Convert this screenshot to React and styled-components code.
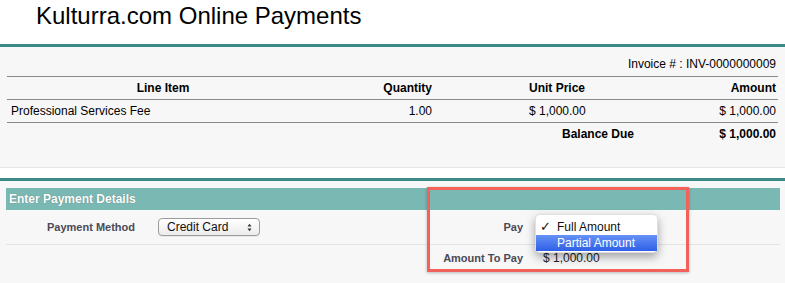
import styled, { createGlobalStyle } from 'styled-components';

const GlobalStyle = createGlobalStyle`
  body {
    margin: 0;
    background: #fff;
    font-family: "Liberation Sans", Arial, sans-serif;
    color: #000;
  }
`;

const Page = styled.div`
  width: 785px;
  height: 283px;
  overflow: hidden;
`;

const Title = styled.h1`
  box-sizing: border-box;
  height: 47px;
  margin: 0;
  padding: 2px 0 0 36px;
  font-size: 24px;
  line-height: 28px;
  font-weight: normal;
  border-bottom: 3px solid #3c8a87;
`;

const InvoicePanel = styled.div`
  background: #f7f7f7;
  padding: 7px 7px 22px;
  border-bottom: 1px solid #e6e6e6;
  font-size: 12px;
`;

const InvoiceNo = styled.div`
  text-align: right;
  line-height: 20px;
  margin-bottom: 2px;
  padding-right: 2px;
`;

const Row = styled.div`
  display: grid;
  grid-template-columns: 312px 120px 201px 1fr;
  height: 22px;
  line-height: 22px;
  border-top: ${p => (p.$top ? '1px solid #8a8a8a' : 'none')};
  border-bottom: ${p => (p.$line ? '1px solid #8a8a8a' : 'none')};
  font-weight: ${p => (p.$bold ? 'bold' : 'normal')};
`;

const Cell = styled.div`
  text-align: ${p => p.$align || 'left'};
  padding-left: ${p => p.$pl || 0}px;
  padding-right: ${p => p.$pr || 0}px;
  white-space: nowrap;
`;

const PaymentSection = styled.div`
  position: relative;
  margin-top: 10px;
  border-top: 3px solid #3c8a87;
  background: #f7f7f7;
  padding: 7px 5px 20px 6px;
`;

const SectionHeader = styled.div`
  height: 22px;
  line-height: 22px;
  background: #7ab8b4;
  color: #fff;
  font-size: 12px;
  font-weight: bold;
  padding-left: 3px;
  text-shadow: 0 0 1px rgba(0, 0, 0, 0.35);
`;

const FormRow = styled.div`
  display: grid;
  grid-template-columns: 141px 242px 146px 1fr;
  height: ${p => p.$h}px;
  border-bottom: ${p => (p.$line ? '1px solid #e3e3e3' : 'none')};
`;

const Label = styled.div`
  display: flex;
  align-items: ${p => p.$valign || 'center'};
  justify-content: flex-end;
  padding-right: 12px;
  padding-top: ${p => p.$pt || 0}px;
  font-size: 11px;
  font-weight: bold;
  color: #4a4a56;
  line-height: 22px;
`;

const Field = styled.div`
  position: relative;
  display: flex;
  align-items: ${p => p.$valign || 'center'};
  padding-left: ${p => p.$pl}px;
  padding-top: ${p => p.$pt || 0}px;
  font-size: 12px;
  color: #222;
  line-height: 22px;
`;

const SelectBox = styled.div`
  box-sizing: border-box;
  width: 102px;
  height: 18px;
  display: flex;
  align-items: center;
  justify-content: space-between;
  padding: 0 7px 0 8px;
  border: 1px solid #9c9c9c;
  border-radius: 4px;
  background: linear-gradient(#ffffff, #ececec);
  box-shadow: 0 1px 0 rgba(0, 0, 0, 0.06);
  font-size: 12px;
  line-height: 16px;
  color: #111;
`;

const Popup = styled.div`
  position: absolute;
  left: 0;
  top: 4px;
  width: 123px;
  box-sizing: border-box;
  padding: 4px 0 1px;
  background: #fff;
  border: 1px solid rgba(0, 0, 0, 0.12);
  border-radius: 5px;
  box-shadow: 0 4px 10px rgba(0, 0, 0, 0.35);
  z-index: 2;
`;

const Option = styled.div`
  position: relative;
  height: 16px;
  line-height: 16px;
  padding-left: 21px;
  font-size: 12px;
  color: ${p => (p.$active ? '#fff' : '#111')};
  background: ${p => (p.$active ? 'linear-gradient(#6792f6, #2f5fe6)' : 'transparent')};
`;

const Check = styled.span`
  position: absolute;
  left: 4px;
  top: 0;
  font-family: "DejaVu Sans", sans-serif;
  font-size: 13px;
  font-weight: bold;
`;

const Highlight = styled.div`
  position: absolute;
  left: 427px;
  top: 6px;
  width: 262px;
  height: 85px;
  box-sizing: border-box;
  border: 3px solid #f2625a;
  box-shadow: 0 1px 3px rgba(0, 0, 0, 0.25);
  pointer-events: none;
  z-index: 3;
`;

const Arrows = () => (
  <svg width="5" height="9" viewBox="0 0 5 9">
    <path d="M0.5 3.5 L2.5 0.8 L4.5 3.5 Z" fill="#333" />
    <path d="M0.5 5.5 L2.5 8.2 L4.5 5.5 Z" fill="#333" />
  </svg>
);

const App = () => {
  return (
    <Page>
      <GlobalStyle />
      <Title>Kulturra.com Online Payments</Title>
      <InvoicePanel>
        <InvoiceNo>Invoice # : INV-0000000009</InvoiceNo>
        <Row $top $line $bold>
          <Cell $align="center">Line Item</Cell>
          <Cell $align="right" $pr={7}>Quantity</Cell>
          <Cell $pl={90}>Unit Price</Cell>
          <Cell $align="right" $pr={2}>Amount</Cell>
        </Row>
        <Row $line>
          <Cell $pl={4}>Professional Services Fee</Cell>
          <Cell $align="right" $pr={7}>1.00</Cell>
          <Cell $pl={90}>$ 1,000.00</Cell>
          <Cell $align="right" $pr={2}>$ 1,000.00</Cell>
        </Row>
        <Row $bold>
          <Cell />
          <Cell />
          <Cell $align="right" $pr={6}>Balance Due</Cell>
          <Cell $align="right" $pr={2}>$ 1,000.00</Cell>
        </Row>
      </InvoicePanel>

      <PaymentSection>
        <SectionHeader>Enter Payment Details</SectionHeader>
        <FormRow $h={34} $line>
          <Label>Payment Method</Label>
          <Field $pl={11}>
            <SelectBox>
              <span>Credit Card</span>
              <Arrows />
            </SelectBox>
          </Field>
          <Label>Pay</Label>
          <Field $pl={8}>
            <Popup>
              <Option>
                <Check>✓</Check>Full Amount
              </Option>
              <Option $active>Partial Amount</Option>
            </Popup>
          </Field>
        </FormRow>
        <FormRow $h={26}>
          <Label />
          <Field $pl={8} />
          <Label $valign="flex-start" $pt={2}>Amount To Pay</Label>
          <Field $pl={8} $valign="flex-start" $pt={2}>$ 1,000.00</Field>
        </FormRow>
        <Highlight />
      </PaymentSection>
    </Page>
  );
};

export default App;
